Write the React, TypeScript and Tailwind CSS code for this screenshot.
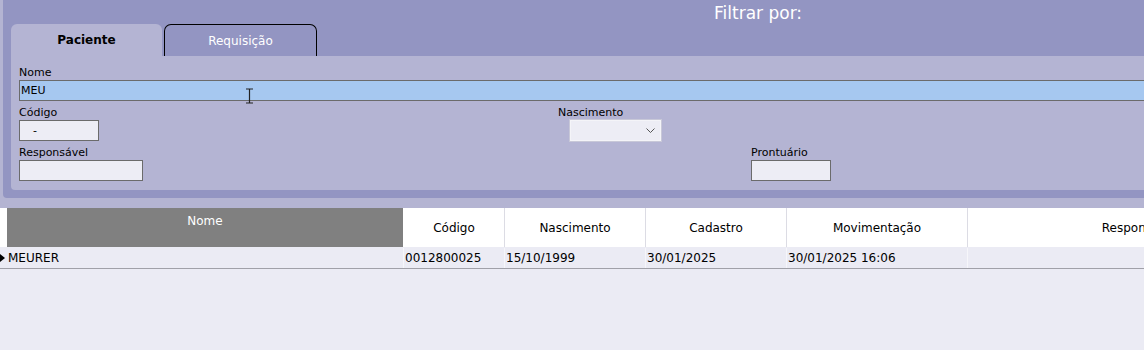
import React from 'react';

const font = { fontFamily: '"DejaVu Sans", Verdana, sans-serif' };

const columns = [
  { label: 'Código', width: 'w-[101px]' },
  { label: 'Nascimento', width: 'w-[141px]' },
  { label: 'Cadastro', width: 'w-[141px]' },
  { label: 'Movimentação', width: 'w-[181px]' },
  { label: 'Responsável', width: 'w-[344px]' },
];

const row = ['0012800025', '15/10/1999', '30/01/2025', '30/01/2025 16:06', ''];

const Field = ({ label, width, value = '' }: { label: string; width: string; value?: string }) => (
  <div className="flex flex-col">
    <span className="h-[14px] text-[11px] leading-[13px] text-black">{label}</span>
    <div className={`${width} h-[21px] border border-[#6b6b6b] bg-[#ededf5] pl-[13px] text-[11px] leading-[19px] text-black`}>
      {value}
    </div>
  </div>
);

export default function App() {
  return (
    <div className="w-[1144px] h-[350px] overflow-hidden bg-[#ebebf4] select-none" style={font}>
      {/* filtro */}
      <div className="bg-[#b4b4d2] pl-[3px] pb-[10px]">
        <div className="flex h-[198px] flex-col rounded-bl-[4px] bg-[#9395c2] pl-[8px] pb-[8px]">
          <div className="flex h-[56px] items-start">
            <div className="flex self-end">
              <div className="flex h-[32px] w-[151px] items-center justify-center rounded-t-[6px] bg-[#b4b4d3] text-[12px] font-bold text-black">
                Paciente
              </div>
              <div className="ml-[2px] flex h-[32px] w-[153px] items-center justify-center rounded-t-[7px] border border-b-0 border-black bg-[#9395c2] text-[12px] text-white">
                Requisição
              </div>
            </div>
            <span className="ml-[397px] mt-[1px] text-[17px] text-white">Filtrar por:</span>
          </div>

          <div className="flex-1 rounded-bl-[4px] bg-[#b4b4d3] pl-[8px] pt-[10px]">
            <span className="block h-[14px] text-[11px] leading-[13px] text-black">Nome</span>
            <div className="relative h-[21px] border border-r-0 border-[#6b6b6b] bg-[#a6c8f0] pl-[1px] text-[11px] leading-[19px] text-black">
              MEU
              <svg className="absolute left-[225px] top-[7px]" width="9" height="16" viewBox="0 0 9 16">
                <path d="M1 1h7M4.5 1v14M1 15h7" stroke="#222" strokeWidth="1.2" fill="none" />
              </svg>
            </div>

            <div className="mt-[5px] flex items-start">
              <Field label="Código" width="w-[80px]" value="-" />
              <div className="ml-[459px] flex flex-col">
                <span className="h-[14px] text-[11px] leading-[13px] text-black">Nascimento</span>
                <div className="ml-[12px] flex h-[21px] w-[91px] items-center justify-end border border-[#f4f4f8] bg-[#ededf5] pr-[5px] shadow-[0_0_0_1px_#c8c8d8]">
                  <svg width="9" height="5" viewBox="0 0 9 5">
                    <path d="M0.5 0.5L4.5 4.5L8.5 0.5" stroke="#555" fill="none" />
                  </svg>
                </div>
              </div>
            </div>

            <div className="mt-[5px] flex items-start">
              <Field label="Responsável" width="w-[124px]" />
              <div className="ml-[608px]">
                <Field label="Prontuário" width="w-[80px]" />
              </div>
            </div>
          </div>
        </div>
      </div>

      {/* grade */}
      <div className="flex h-[39px] overflow-hidden bg-white text-[12px] text-black">
        <div className="w-[7px] shrink-0" />
        <div className="w-[396px] shrink-0 bg-[#808080] pt-[4px] text-center text-white">Nome</div>
        <div className="w-[1px] shrink-0 bg-white" />
        {columns.map((c) => (
          <div key={c.label} className={`${c.width} flex shrink-0 items-center justify-center border-r border-[#dcdce4]`}>
            {c.label}
          </div>
        ))}
      </div>
      <div className="flex h-[22px] overflow-hidden border-b border-[#a0a0a8] bg-[#ebebf4] pt-[1px] text-[12px] leading-[21px] text-black">
        <div className="flex w-[7px] shrink-0 items-center">
          <svg width="5" height="8" viewBox="0 0 5 8">
            <path d="M0 0L5 4L0 8Z" fill="#000" />
          </svg>
        </div>
        <div className="w-[397px] shrink-0 border-r border-[#f6f6fa] pl-[1px]">MEURER</div>
        {row.map((v, i) => (
          <div key={i} className={`${columns[i].width} shrink-0 border-r border-[#f6f6fa] pl-[1px]`}>
            {v}
          </div>
        ))}
      </div>
    </div>
  );
}
